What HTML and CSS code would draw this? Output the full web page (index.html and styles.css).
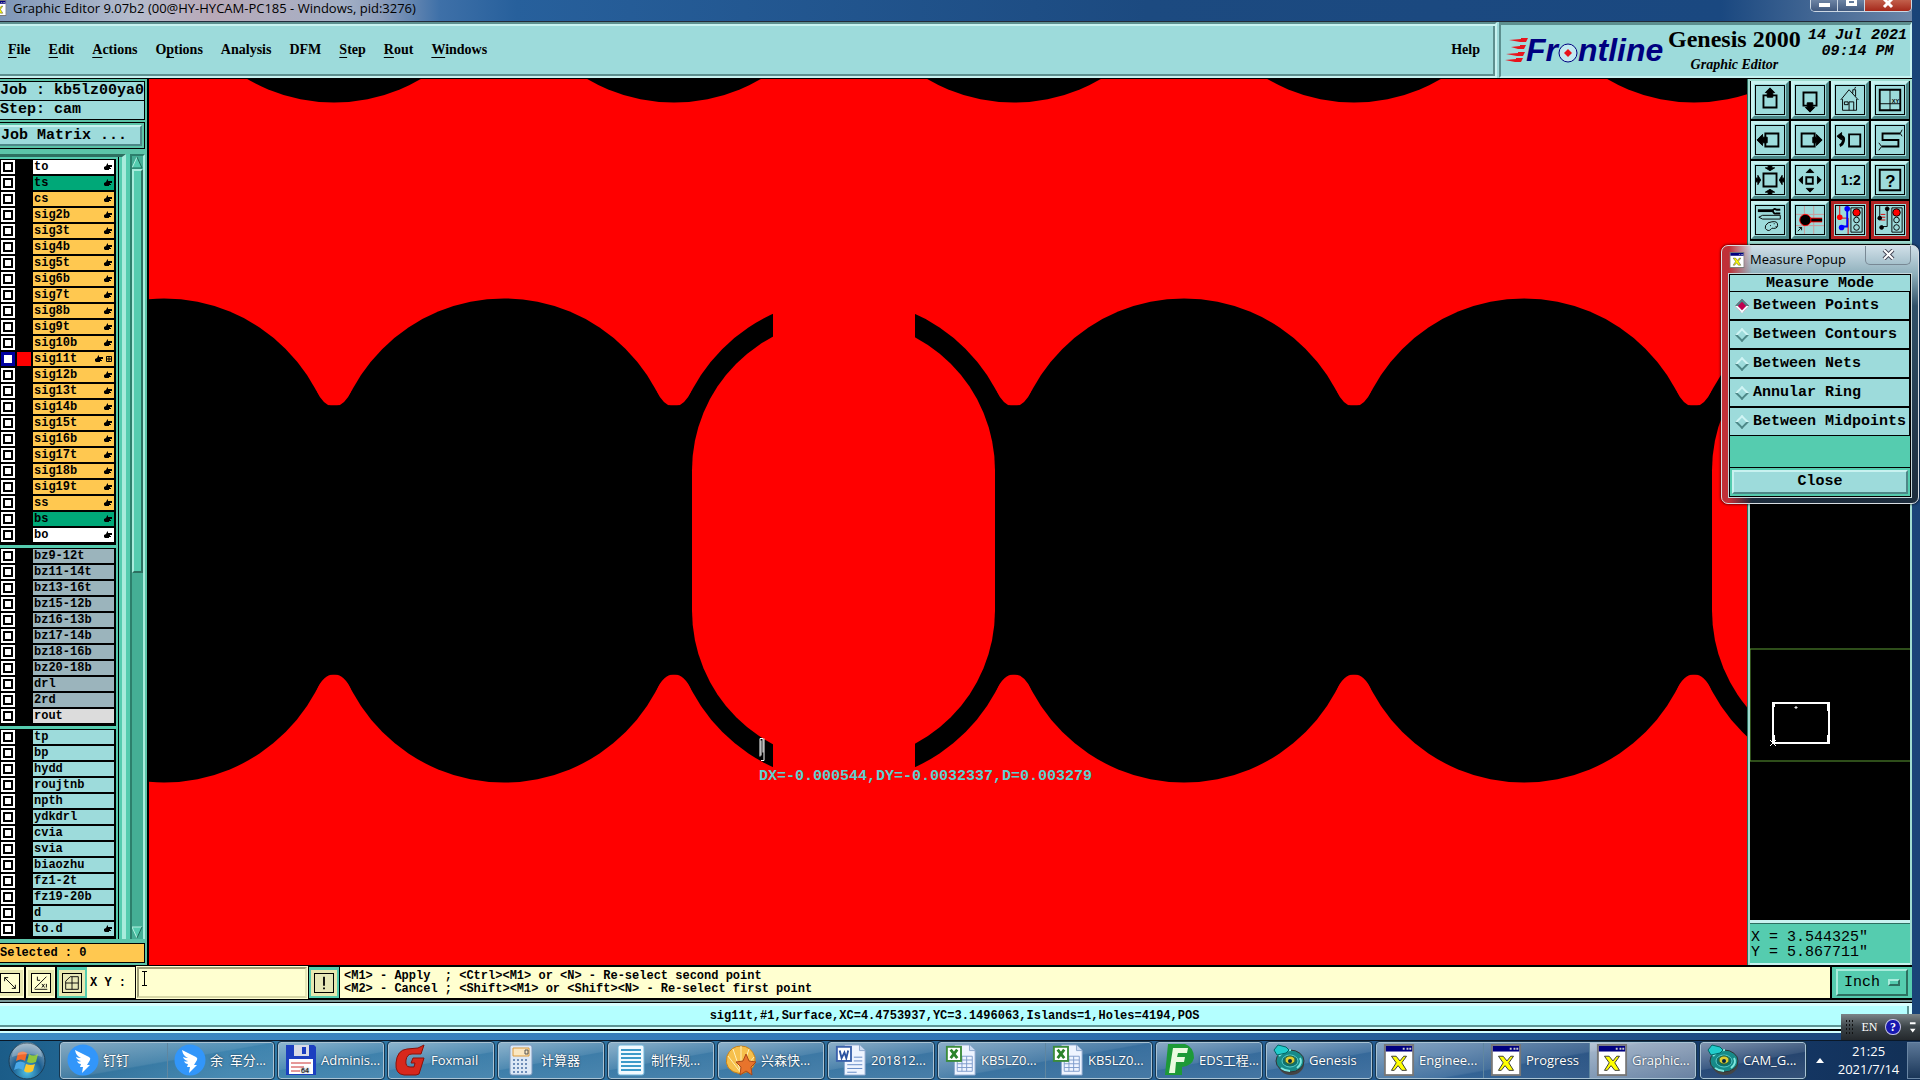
FILE: index.html
```
<!DOCTYPE html>
<html lang="zh-CN">
<head>
    <meta charset="UTF-8">
    <meta name="viewport" content="width=device-width, initial-scale=1.0">
    <title>Graphic Editor 9.07b2</title>
    <link rel="stylesheet" href="styles.css">
</head>
<body>
    <!-- shared icons -->
    <svg class="defs" width="0" height="0">
        <symbol id="hand" viewBox="0 0 8 8"><path d="M3 1l1-1v2h4v2H6v1h1v1H5v1H1L0 6V4l2-1z"/></symbol>
        <symbol id="xwin" viewBox="0 0 32 34">
            <rect x="1" y="1" width="30" height="32" fill="#fff" stroke="#777" stroke-width="2"/>
            <rect x="2" y="2" width="28" height="6" fill="#000080"/>
            <path d="M20 4h2v2h-2zM24 4h2v2h-2zM27 4h2v2h-2z" fill="#ccc"/>
            <path d="M8 13h5l4 5 4-5h3l-5 7 5 8h-5l-4-5-4 5H8l5-8z" fill="#ff0" stroke="#333"/>
        </symbol>
        <symbol id="ding" viewBox="0 0 32 32">
            <circle cx="16" cy="16" r="15.500" fill="#3296fa"/>
            <path d="M8 6l14 7q2 1 1 3l-3 5h3l-8 8 1-6h-3l1-3q-3 0-4-3 2 1 4 0-4-1-5-4 2 1 5 1-5-2-6-8z" fill="#fff"/>
        </symbol>
        <symbol id="excel" viewBox="0 0 32 34">
            <path d="M9 1h16l6 6v26H9z" fill="#eef4ff" stroke="#8ba6cc"/>
            <path d="M25 1v6h6" fill="#cddcf2" stroke="#8ba6cc"/>
            <path d="M12 13h16M12 17h16M12 21h16M12 25h16M12 29h16M12 13v16M17 13v16M22 13v16M28 13v16" stroke="#7d9bcb" fill="none"/>
            <rect x="1" y="3" width="15" height="15" fill="#fff" stroke="#3b8c3b" stroke-width="2"/>
            <path d="M5 6l7 9M12 6l-7 9" stroke="#2b832b" stroke-width="3"/>
        </symbol>
        <symbol id="disc" viewBox="0 0 32 32">
            <ellipse cx="18" cy="20" rx="13" ry="11" fill="#444"/>
            <ellipse cx="17" cy="17" rx="14" ry="11" fill="#178a88" stroke="#333"/>
            <path d="M6 12q5-6 12-6M27 14q3 5-3 10M8 24q4 3 9 3" stroke="#7fe8e0" stroke-width="2" fill="none"/>
            <ellipse cx="17" cy="17" rx="8" ry="6" fill="#0f6f6c" stroke="#5cc"/>
            <ellipse cx="17" cy="16" rx="5" ry="4" fill="#dc3" stroke="#363"/>
            <circle cx="17" cy="17" r="2" fill="#024"/>
            <path d="M1 6l4-5 8 2 3 3-3 3-9 2z" fill="#2cc" stroke="#066"/>
        </symbol>
    </svg>

    <div class="window">
        <header class="titlebar">
            <svg class="title-icon" viewBox="0 0 32 34"><use href="#xwin"/></svg>
            <h1>Graphic Editor 9.07b2 (00@HY-HYCAM-PC185 - Windows, pid:3276)</h1>
            <div class="win-btns">
                <button class="win-min" aria-label="Minimize"><i></i></button>
                <button class="win-max" aria-label="Maximize"><i></i></button>
                <button class="win-close" aria-label="Close window"><svg width="12" height="9" viewBox="0 0 12 9"><path d="M2-1l8 8M10-1L2 7" stroke="#fff" stroke-width="3"/></svg></button>
            </div>
        </header>

        <div class="header">
            <nav class="menubar">
                <button><u>F</u>ile</button>
                <button><u>E</u>dit</button>
                <button><u>A</u>ctions</button>
                <button>O<u>p</u>tions</button>
                <button>Analysis</button>
                <button>DFM</button>
                <button><u>S</u>tep</button>
                <button><u>R</u>out</button>
                <button><u>W</u>indows</button>
                <button class="help">Help</button>
            </nav>
            <div class="brand">
                <svg class="logo" width="162" height="38" viewBox="0 0 162 38">
                    <g fill="#e8141c">
                        <path d="M4 6l12-1 0-1h7l-2 4h-6zM6 13l9-1 0-1h6l-2 4h-6zM1 20l12-1 0-1h7l-2 4h-6zM0 26l11-1 0-1h7l-2 4h-6z"/>
                    </g>
                    <text x="21" y="27">Fr</text>
                    <circle cx="63" cy="19" r="9" fill="#c4eaf0" stroke="#000080" stroke-width="1"/>
                    <path d="M63 15l4 4-4 4-4-4z" fill="#e8141c"/>
                    <text x="73" y="27">ntline</text>
                </svg>
                <div class="product">
                    <strong>Genesis 2000</strong>
                    <em>Graphic Editor</em>
                </div>
                <div class="date"><span>14 Jul 2021</span><span>09:14 PM</span></div>
            </div>
        </div>

        <main class="main">
            <aside class="left">
                <div class="job">Job : kb5lz00ya0</div>
                <div class="job">Step: cam</div>
                <div class="matrix"><button>Job Matrix ...</button></div>
                <div class="layer-area">
                    <div class="layers" id="layers"></div>
                    <div class="scroll">
                        <svg width="11" height="13" viewBox="0 0 11 13"><path d="M5 1L0 12h10z" fill="#55ccaf"/><path d="M5 1L0 12" stroke="#b4f0e0"/><path d="M0 12h10L5 1" stroke="#1f6a58" fill="none"/></svg>
                        <div class="thumb"></div>
                        <div class="trough"></div>
                        <svg width="11" height="13" viewBox="0 0 11 13"><path d="M0 1h10L5 12z" fill="#55ccaf"/><path d="M10 1H0l5 11" stroke="#b4f0e0" fill="none"/><path d="M10 1L5 12" stroke="#1f6a58"/></svg>
                    </div>
                </div>
                <div class="selected">Selected : 0</div>
            </aside>

            <svg class="canvas" viewBox="149 79 1598 887" preserveAspectRatio="xMidYMid slice">
                <defs>
                    <g id="cell">
                        <rect x="-172" y="299" width="344" height="484" rx="172"/>
                        <path d="M152 391q8 15 15 15h8v269h-6q-9 0-17 16l-20-20V416zM-152 391q-8 15-15 15h-8v269h6q9 0 17 16l20-20V416z"/>
                    </g>
                    <g id="slot" fill="#f00">
                        <rect x="-151" y="320" width="303" height="442" rx="151"/>
                        <rect x="-70" y="290" width="142" height="500"/>
                    </g>
                </defs>
                <rect x="149" y="79" width="1598" height="887" fill="#f00"/>
                <circle cx="334" cy="-69" r="172"/>
                <circle cx="674" cy="-69" r="172"/>
                <circle cx="1014" cy="-69" r="172"/>
                <circle cx="1354" cy="-69" r="172"/>
                <circle cx="1694" cy="-69" r="172"/>
                <use href="#cell" x="164"/>
                <use href="#cell" x="504"/>
                <use href="#cell" x="844"/>
                <use href="#cell" x="1184"/>
                <use href="#cell" x="1524"/>
                <use href="#cell" x="1864"/>
                <use href="#slot" x="843"/>
                <use href="#slot" x="1863"/>
                <path d="M760 739h3v14M760 739v18M761 741v15M764 739v22h-3" stroke="#fff" fill="none"/>
                <text x="759" y="780">DX=-0.000544,DY=-0.0032337,D=0.003279</text>
            </svg>

            <aside class="right">
                <div class="tools">
                    <button aria-label="Pan up"><svg viewBox="0 0 30 30"><path class="w2" d="M8 10h14v13H8z"/><path class="f" d="M15 2l5 5h-2v5h-6V7h-2z"/></svg></button>
                    <button aria-label="Pan down"><svg viewBox="0 0 30 30"><path class="w2" d="M8 7h14v14H8z"/><path class="f" d="M15 28l5-5h-2v-5h-6v5h-2z"/></svg></button>
                    <button aria-label="Home"><svg viewBox="0 0 30 30"><path d="M5 15L14 4l10 11M7 14v12h15V14M9 17h4v3H9zM14 26v-9h5v9M18 8V4h3v7M20 3l1-2"/></svg></button>
                    <button aria-label="Window XY"><svg viewBox="0 0 30 30"><path class="w2" d="M4 4h22v22H4z"/><path d="M15 4v22M4 19h22"/><text x="17" y="18" font-size="6">XY</text></svg></button>
                    <button aria-label="Pan left"><svg viewBox="0 0 30 30"><path class="w2" d="M10 8h14v14H10z"/><path class="f" d="M1 15l6-6v3h5v6H7v3z"/></svg></button>
                    <button aria-label="Pan right"><svg viewBox="0 0 30 30"><path class="w2" d="M6 8h14v14H6z"/><path class="f" d="M28 15l-6-6v3h-4v6h4v3z"/></svg></button>
                    <button aria-label="Previous view"><svg viewBox="0 0 30 30"><path class="w2" d="M14 9h12v13H14z"/><path d="M3 11h3q3 1 2 5t-4 5" stroke-width="3"/><path class="f" d="M1 11l5-4v8z"/></svg></button>
                    <button aria-label="Serpentine"><svg viewBox="0 0 30 30"><path class="w2" d="M26 8H7v7h17v7H6"/><path d="M28 4l-2 4 2 3M3 18l3 4-3 4"/></svg></button>
                    <button aria-label="Zoom in"><svg viewBox="0 0 30 30"><path class="w2" d="M8 8h14v14H8z"/><path class="f" d="M15 5l-5-3h3V0h4v2h3zM15 25l-5 3h3v2h4v-2h3zM5 15l-3-5v3H0v4h2v3zM25 15l3-5v3h2v4h-2v3z"/></svg></button>
                    <button aria-label="Zoom out"><svg viewBox="0 0 30 30"><path class="w2" d="M11 12h7v7h-7z"/><path class="f" d="M15 3l4 4h-8zM15 28l4-4h-8zM3 15l4-4v8zM27 15l-4-4v8z"/></svg></button>
                    <button aria-label="Scale 1:2"><svg viewBox="0 0 30 30"><text x="5" y="20" font-size="15" font-weight="bold">1:2</text></svg></button>
                    <button aria-label="Query"><svg viewBox="0 0 30 30"><path class="w2" d="M4 4h22v22H4z"/><text x="10" y="22" font-size="18">?</text></svg></button>
                    <button aria-label="Setup"><svg viewBox="0 0 30 30"><path d="M2 5h16" stroke-width="3"/><path d="M26 4h-4q-3-2-4 1 1 4 4 3h4" stroke-width="2"/><path d="M3 12l4-2h19v4H7zM13 18q-4 3-3 6 3 4 6 1 1-2 3-1 5 0 4-5-1-4-10-1zM15 21h1M19 19h1M21 22h1"/></svg></button>
                    <button aria-label="Snap"><svg viewBox="0 0 30 30"><path d="M9 0v30M19 0v30M0 9h30M0 21h30" stroke="#c99"/><path d="M14 15h14" stroke="#f00" stroke-width="5"/><path d="M14 15h14" stroke="#000" stroke-width="3"/><circle cx="10" cy="15" r="6" class="f snap"/><path d="M2 27l4-4M3 23h3v3"/></svg></button>
                    <button class="red" aria-label="Net on"><svg viewBox="0 0 30 30"><path d="M4 0v13h9v17" stroke="#d00"/><path d="M12 3v19H6" stroke="#00f" stroke-width="2"/><circle cx="4" cy="12" r="3" fill="#f00" stroke="none"/><g fill="#00f" stroke="none"><circle cx="12" cy="3" r="3"/><circle cx="6" cy="23" r="3"/></g><path d="M16 2h12v26H16z"/><circle cx="22" cy="7" r="4" fill="#f00"/><circle cx="22" cy="15" r="3"/><circle cx="22" cy="23" r="3"/></svg></button>
                    <button class="red" aria-label="Net check"><svg viewBox="0 0 30 30"><path d="M4 0v12M12 3v19H6"/><path d="M5 9h5M5 12h5M5 15h5" stroke="#d00"/><g class="f"><circle cx="4" cy="13" r="2"/><circle cx="12" cy="3" r="2"/><circle cx="6" cy="23" r="2"/></g><path d="M17 2h11v26H17z"/><circle cx="22" cy="7" r="4" fill="#f00"/><circle cx="22" cy="15" r="3"/><circle cx="22" cy="23" r="3"/></svg></button>
                </div>
                <svg class="overview" viewBox="0 0 160 677" preserveAspectRatio="xMinYMax slice">
                    <rect x="0" y="406" width="170" height="112" fill="none" stroke="#5c9c34"/>
                    <rect x="23" y="460" width="56" height="40" fill="none" stroke="#fff" stroke-width="2"/>
                    <path d="M24 461v3M78 461v7M78 492v7M24 492v7" stroke="#fff" stroke-width="2"/>
                    <path d="M20 497l6 6M26 497l-6 6M45 464h2v1h-2z" stroke="#fff"/>
                </svg>
                <div class="coords"><span>X = 3.544325"</span><span>Y = 5.867711"</span></div>
            </aside>
        </main>

        <div class="command">
            <button class="cmd" aria-label="Diagonal"><svg viewBox="0 0 20 20"><path d="M4 4l12 12M4 8V4h4M16 12v4h-4"/></svg></button>
            <button class="cmd" aria-label="Angle"><svg viewBox="0 0 20 20"><path d="M3 16L16 3M6 3v4h3M3 17h14M11 11l3 4M14 11l-3 4M16 11v4"/></svg></button>
            <button class="cmd on" aria-label="Grid"><svg viewBox="0 0 20 20"><path d="M3 8l5-5h9v14H3zM10 3v14M3 10h14"/></svg></button>
            <label for="xy">X Y :</label>
            <div class="field">
                <input id="xy" type="text">
                <svg class="ibeam" width="7" height="15" viewBox="0 0 7 15"><path d="M1 0.500h5M1 14.500h5M3.500 0v15" stroke="#000"/></svg>
            </div>
            <button class="cmd on" aria-label="Alert"><svg viewBox="0 0 20 20"><path d="M10 3v10M10 15v2" stroke-width="2"/></svg></button>
            <pre class="hint">&lt;M1&gt; - Apply  ; &lt;Ctrl&gt;&lt;M1&gt; or &lt;N&gt; - Re-select second point
&lt;M2&gt; - Cancel ; &lt;Shift&gt;&lt;M1&gt; or &lt;Shift&gt;&lt;N&gt; - Re-select first point</pre>
            <div class="unit">
                <select aria-label="Units"><option>Inch</option><option>mm</option></select>
                <i></i>
            </div>
        </div>
        <div class="status"><p>sig11t,#1,Surface,XC=4.4753937,YC=3.1496063,Islands=1,Holes=4194,POS</p></div>
    </div>

    <section class="popup">
        <div class="popup-title">
            <svg width="16" height="16" viewBox="0 0 32 34"><use href="#xwin"/></svg>
            <h2>Measure Popup</h2>
            <button aria-label="Close popup"><svg width="13" height="11" viewBox="0 0 13 11"><path d="M2 1l9 9M11 1l-9 9" stroke="#445" stroke-width="4"/><path d="M2 1l9 9M11 1l-9 9" stroke="#fff" stroke-width="2"/></svg></button>
        </div>
        <form class="popup-body">
            <h3>Measure Mode</h3>
            <label><input type="radio" name="mode" checked>Between Points</label>
            <label><input type="radio" name="mode">Between Contours</label>
            <label><input type="radio" name="mode">Between Nets</label>
            <label><input type="radio" name="mode">Annular Ring</label>
            <label><input type="radio" name="mode">Between Midpoints</label>
            <div class="popup-foot"><button type="button">Close</button></div>
        </form>
    </section>

    <div class="langbar">
        <span class="grip"></span>
        <span>EN</span>
        <b>?</b>
        <svg width="8" height="16" viewBox="0 0 8 16"><path d="M1 3h6v2H1zM1 10h6l-3 4z" fill="#fff"/></svg>
    </div>

    <footer class="taskbar">
        <button class="start" aria-label="Start">
            <svg width="38" height="38" viewBox="0 0 38 38">
                <defs><radialGradient id="orb" cx=".5" cy=".8" r=".8"><stop offset="0" stop-color="#4fc3e8"/><stop offset=".5" stop-color="#1c5f92"/><stop offset="1" stop-color="#8fa9bd"/></radialGradient></defs>
                <circle cx="19" cy="19" r="18" fill="url(#orb)" stroke="#1b3d55"/>
                <path d="M10 11q5-3 9 0l-2 8q-4-3-9 0z" fill="#f0682c"/>
                <path d="M21 12q4 3 9 0l-2 8q-5 2-9 0z" fill="#8ec63f"/>
                <path d="M8 21q4-3 9 0l-2 7q-4-3-9 0z" fill="#4aa8e8"/>
                <path d="M18 22q5 2 9 0l-2 7q-5 3-9 0z" fill="#fcc82e"/>
                <path d="M4 15a15 15 0 0130 0q-15-6-30 0z" fill="#fff" opacity=".25"/>
            </svg>
        </button>
        <div class="group">
            <button class="task"><svg><use href="#ding"/></svg>钉钉</button>
            <button class="task"><svg><use href="#ding"/></svg>余&nbsp; 军分...</button>
        </div>
        <div class="group"><button class="task"><svg viewBox="0 0 32 32"><path d="M1 1h28l2 2v28H1z" fill="#1c3fc0"/><path d="M9 1h15v11H9z" fill="#d8dbe6"/><path d="M17 3h4v7h-4z" fill="#1c3fc0"/><path d="M4 15h24v15H4z" fill="#fff"/><path d="M6 19h20M6 23h13M6 27h9" stroke="#c33"/><text x="16" y="29" font-size="7">64</text></svg>Adminis...</button></div>
        <div class="group"><button class="task"><svg viewBox="0 0 32 32"><path d="M29 1l-3 9h-9q-5 0-6 6-1 7 4 7h4l1-4h-4l2-5h11l-5 16-3 1H9q-9-1-8-12Q2 6 12 5l11-1z" fill="#d8281c" stroke="#8a1008"/></svg>Foxmail</button></div>
        <div class="group"><button class="task"><svg viewBox="0 0 32 32"><rect x="5" y="1" width="22" height="30" rx="2" fill="#dce8f6" stroke="#7b98bd"/><path d="M8 4h16v8H8z" fill="#fbe7c0" stroke="#db9a3c"/><path d="M20 6h3v4h-3z" fill="none" stroke="#555"/><path d="M8 16h16M8 20h16M8 24h16M8 28h16" stroke="#6d8db8" stroke-width="2" stroke-dasharray="2 2"/></svg>计算器</button></div>
        <div class="group"><button class="task"><svg viewBox="0 0 32 32"><rect x="3" y="1" width="26" height="30" rx="2" fill="#f2faff" stroke="#6db3d8"/><path d="M6 6h20M6 10h20M6 14h20M6 18h20M6 22h20M6 26h20" stroke="#3d9ac9" stroke-width="2"/></svg>制作规...</button></div>
        <div class="group"><button class="task"><svg viewBox="0 0 32 32"><path d="M16 30Q-2 27 2 12 6 2 16 2t14 11q2 13-14 17z" fill="#f6c04c" stroke="#c98118"/><path d="M16 29L3 12M16 29L8 5M16 29V2M16 29l8-24M16 29l13-16" stroke="#fff0b8"/><path d="M21 10l3 7 7 1-5 5 1 8-6-4-6 4 1-8-5-5 7-1z" fill="#e8742c" stroke="#a8481a"/></svg>兴森快...</button></div>
        <div class="group"><button class="task"><svg viewBox="0 0 32 34"><path d="M9 1h16l6 6v26H9z" fill="#eef4ff" stroke="#8ba6cc"/><path d="M25 1v6h6" fill="#cddcf2" stroke="#8ba6cc"/><path d="M19 14h9M19 18h9M12 22h16M12 26h16M12 30h10" stroke="#5f86c4"/><rect x="1" y="3" width="15" height="15" fill="#fff" stroke="#3b62ac" stroke-width="2"/><path d="M4 7l2 8 3-6 2 6 2-8" stroke="#2b52a0" stroke-width="2" fill="none"/></svg>201812...</button></div>
        <div class="group">
            <button class="task"><svg><use href="#excel"/></svg>KB5LZ0...</button>
            <button class="task"><svg><use href="#excel"/></svg>KB5LZ0...</button>
        </div>
        <div class="group"><button class="task"><svg viewBox="0 0 32 32"><path d="M5 0h17q9 3 9 14-2 8-12 9v8H2z" fill="#1d9a38"/><path d="M10 4h15l-1 5h-9l-1 4h8l-1 5h-8l-1 11H6z" fill="#eafbe0"/></svg>EDS工程...</button></div>
        <div class="group"><button class="task"><svg><use href="#disc"/></svg>Genesis</button></div>
        <div class="group">
            <button class="task"><svg><use href="#xwin"/></svg>Enginee...</button>
            <button class="task"><svg><use href="#xwin"/></svg>Progress</button>
            <button class="task active"><svg><use href="#xwin"/></svg>Graphic...</button>
        </div>
        <div class="group"><button class="task"><svg><use href="#disc"/></svg>CAM_G...</button></div>
        <div class="tray">
            <svg width="8" height="5" viewBox="0 0 8 5"><path d="M4 0l4 5H0z" fill="#fff"/></svg>
            <div class="clock"><span>21:25</span><span>2021/7/14</span></div>
        </div>
        <button class="desktop" aria-label="Show desktop"></button>
    </footer>

    <script>
      // name, colour class; * = has attributes (hand icon)
      var groups = [
        ['to*white', 'ts*green', 'cs*gold', 'sig2b*gold', 'sig3t*gold', 'sig4b*gold', 'sig5t*gold', 'sig6b*gold',
         'sig7t*gold', 'sig8b*gold', 'sig9t*gold', 'sig10b*gold', 'sig11t*gold', 'sig12b*gold', 'sig13t*gold',
         'sig14b*gold', 'sig15t*gold', 'sig16b*gold', 'sig17t*gold', 'sig18b*gold', 'sig19t*gold', 'ss*gold',
         'bs*green', 'bo*white'],
        ['bz9-12t gray', 'bz11-14t gray', 'bz13-16t gray', 'bz15-12b gray', 'bz16-13b gray', 'bz17-14b gray',
         'bz18-16b gray', 'bz20-18b gray', 'drl gray', '2rd gray', 'rout silver'],
        ['tp cyan', 'bp cyan', 'hydd cyan', 'roujtnb cyan', 'npth cyan', 'ydkdrl cyan', 'cvia cyan', 'svia cyan',
         'biaozhu cyan', 'fz1-2t cyan', 'fz19-20b cyan', 'd cyan', 'to.d*cyan']
      ];
      var html = '';
      for (var i = 0; i < groups.length; i++) {
        html += '<ul>';
        for (var j = 0; j < groups[i].length; j++) {
          var item = groups[i][j];
          var hand = item.indexOf('*') > -1;
          var arr = item.split(/[* ]/);
          var work = arr[0] == 'sig11t';
          html += '<li' + (work ? ' class="work"' : '') + '><input type="checkbox" id="l-' + arr[0] + '"' + (work ? ' checked' : '') + '>' +
            '<i></i><label class="' + arr[1] + '" for="l-' + arr[0] + '"><span>' + arr[0] + '</span>' +
            (hand ? '<svg width="8" height="8"><use href="#hand"/></svg>' : '') +
            (work ? '<svg width="6" height="6" viewBox="0 0 6 6"><path d="M.5.5h5v5h-5zM3 0v6M0 3h6" fill="none" stroke="#000"/></svg>' : '') +
            '</label></li>';
        }
        html += '</ul>';
      }
      document.getElementById('layers').innerHTML = html;
    </script>
</body>
</html>
```

FILE: styles.css
```
* {
    box-sizing: border-box;
}
html, body {
    height: 100%;
    margin: 0;
    padding: 0;
}
body {
    display: flex;
    flex-direction: column;
    overflow: hidden;
    background: #000;
    color: #000;
    font: bold 15px/16px "Liberation Mono", monospace;
}
button, input, select {
    margin: 0;
    padding: 0;
    border: 0;
    border-radius: 0;
    background: none;
    color: inherit;
    font: inherit;
    appearance: none;
}
h1, h2, h3, p, ul, pre {
    margin: 0;
    padding: 0;
    font: inherit;
    list-style: none;
}
.defs {
    position: absolute;
}

/* window */
.window {
    flex: 1;
    min-height: 0;
    display: flex;
    flex-direction: column;
    padding: 0 8px 7px 0;
    background: linear-gradient(to right, #3d8cc4 0, #2f74b4 50%, #1c4a80 90%, #1a4478 100%);
}
.titlebar {
    display: flex;
    align-items: flex-start;
    height: 21px;
    overflow: hidden;
    font: 13px/16px "Open Sans", "Noto Sans CJK SC", sans-serif;
    background: linear-gradient(to right, #7d96b8 0, #b5bccd 7%, #b9a9b8 11%, #a3b0c6 18%, #8b9cba 20%, #3e70a8 23%, #27609c 27%, #1c4a80 60%, #1a4880 90%, #6c86a8 100%);
}
.title-icon {
    width: 16px;
    height: 16px;
    margin-left: -9px;
}
.titlebar h1 {
    flex: 1;
    padding-left: 6px;
}
.win-btns {
    display: flex;
    height: 12px;
    border: 1px solid #ccd8e4;
    border-top: 0;
    border-radius: 0 0 5px 5px;
    overflow: hidden;
}
.win-btns button {
    display: flex;
    justify-content: center;
    width: 27px;
    background: linear-gradient(#6d84a4, #41597e);
    border-right: 1px solid #ccd8e4;
}
.win-btns .win-close {
    width: 46px;
    border: 0;
    background: linear-gradient(#c2604c, #a5281a);
}
.win-min i {
    width: 11px;
    height: 4px;
    margin-top: 3px;
    background: #fff;
}
.win-max i {
    width: 11px;
    height: 8px;
    margin-top: -2px;
    border: 3px solid #fff;
}

/* menu bar and logo */
.header {
    display: flex;
    height: 58px;
    border-top: 1px solid #222b3a;
    border-bottom: 1px solid #000;
    background: #9ddbdb;
}
.menubar {
    flex: 1;
    display: flex;
    align-items: center;
    gap: 18px;
    padding: 0 15px 0 8px;
    margin-right: 2px;
    border: 2px solid #c8f2f0;
    border-left: 0;
    border-top-color: #5d8f8f;
    box-shadow: inset 0 2px #c8f2f0, inset -2px -2px #5d8f8f;
    font: bold 14px/16px "Liberation Serif", serif;
}
.menubar u {
    text-underline-offset: 3px;
}
.help {
    margin-left: auto;
}
.brand {
    display: flex;
    width: 413px;
    padding: 3px 3px 0 4px;
    border: 2px solid #c8f2f0;
    border-top: 3px solid #5d8f8f;
    border-left-color: #5d8f8f;
}
.logo {
    margin-top: 6px;
    overflow: visible;
}
.logo text {
    font: italic bold 32px "Liberation Sans", sans-serif;
    fill: #000080;
}
.product {
    display: flex;
    flex-direction: column;
    align-items: center;
    padding-left: 1px;
    font-family: "Liberation Serif", serif;
}
.product strong {
    font-size: 24px;
    line-height: 22px;
}
.product em {
    padding-top: 7px;
    font-size: 14px;
}
.date {
    display: flex;
    flex-direction: column;
    align-items: center;
    margin-left: auto;
    font-style: italic;
}

/* layer list */
.main {
    flex: 1;
    min-height: 0;
    display: flex;
}
.left {
    display: flex;
    flex-direction: column;
    width: 149px;
    padding: 2px 2px 2px 0;
    border-right: 2px solid #000;
    background: #5cc4a8;
}
.job {
    height: 20px;
    margin-bottom: -1px;
    border: 1px solid #000;
    border-left: 0;
    background: #9ddbdb;
    line-height: 18px;
    white-space: nowrap;
}
.matrix {
    height: 27px;
    margin-top: 3px;
    padding: 2px;
    padding-left: 0;
    border: 1px solid #000;
    border-left: 0;
}
.matrix button {
    width: 100%;
    height: 21px;
    padding-left: 1px;
    border: 2px solid #c8f2f0;
    border-left: 0;
    border-right-color: #4d8787;
    border-bottom-color: #4d8787;
    background: #9ddbdb;
    text-align: left;
    line-height: 16px;
}
.layer-area {
    display: flex;
    flex: 1;
    min-height: 0;
    margin-top: 5px;
    background: #55ccaf;
}
.layers {
    width: 126px;
    padding-top: 2px;
    border-top: 3px solid #2d6f60;
    border-right: 4px solid #a8ecdc;
    background: linear-gradient(to right, #55ccaf 118px, #000 118px, #000 119px, #55ccaf 119px);
    overflow: hidden;
}
.layers ul {
    width: 116px;
    margin-bottom: 3px;
    padding: 1px 0;
    background: #000;
}
.layers li {
    display: flex;
    height: 16px;
    padding: 0 2px 2px 1px;
}
.layers input {
    width: 14px;
    height: 14px;
    border: 2px solid #fff;
    background: #fff;
    box-shadow: inset 0 0 0 2px #000;
}
.layers i {
    width: 14px;
    margin: 0 2px;
}
.work input {
    border-color: #0000a0;
    box-shadow: inset 0 0 0 1px #0000a0;
}
.work i {
    background: #f00;
}
.layers label {
    flex: 1;
    display: flex;
    align-items: center;
    gap: 3px;
    padding: 0 2px 0 1px;
    font-size: 12px;
    line-height: 14px;
}
.layers label span {
    flex: 1;
}
.white { background: #fff; }
.green { background: #00a878; }
.gold { background: #ffc850; }
.gray { background: #9bb4bc; }
.silver { background: #dcdcdc; }
.cyan { background: #9ddbdb; }
.scroll {
    display: flex;
    flex-direction: column;
    width: 15px;
    margin-left: 4px;
    border: 2px solid #2d7f6c;
    border-right-color: #a8ecdc;
    border-bottom: 0;
    background: #45ae95;
}
.scroll svg {
    flex: none;
}
.thumb {
    flex: 406;
    width: 11px;
    border: 2px solid #a8ecdc;
    border-right-color: #2d6f60;
    border-bottom-color: #2d6f60;
    background: #55ccaf;
}
.trough {
    flex: 358;
}
.selected {
    height: 20px;
    margin-top: 4px;
    border: 1px solid #000;
    border-left: 0;
    background: #ffc850;
    font-size: 12px;
    line-height: 18px;
}

/* drawing area */
.canvas {
    flex: 1;
    min-width: 0;
    height: 100%;
}
.canvas text {
    font: bold 15px "Liberation Mono", monospace;
    fill: #5cd0d0;
}

/* tools and overview */
.right {
    display: flex;
    flex-direction: column;
    width: 165px;
    padding: 2px 2px 0 2px;
    border-left: 1px solid #2d6f60;
    background: #9fdcd0;
}
.tools {
    display: grid;
    grid-template-columns: repeat(4, 1fr);
    gap: 2px;
    padding: 0 1px 2px;
    background: #000;
}
.tools button {
    height: 38px;
    padding: 1px;
    border: 3px solid #c8f2f0;
    border-right-color: #4d8787;
    border-bottom-color: #4d8787;
    background: #9ddbdb;
}
.tools .red {
    border-color: #b02424;
}
.tools svg {
    display: block;
    width: 30px;
    height: 30px;
    border: 1px solid #000;
    fill: none;
    stroke: #000;
}
.tools .w2 {
    stroke-width: 2;
}
.tools .f {
    fill: #000;
}
.tools .snap {
    stroke: #f00;
}
.tools text {
    fill: #000;
    stroke: none;
    font-family: "Liberation Sans", sans-serif;
}
.overview {
    flex: 1;
    min-height: 0;
    margin-top: 3px;
    background: #000;
}
.coords {
    display: flex;
    flex-direction: column;
    height: 45px;
    padding: 7px 1px 0;
    border-top: 3px solid #c8f2f0;
    border-bottom: 2px solid #c8f2f0;
    box-shadow: inset 0 1px #2d6f60;
    background: #55ccaf;
    line-height: 15px;
    font-weight: normal;
}

/* command line */
.command {
    display: flex;
    height: 35px;
    padding: 2px 0;
    background: #000;
}
.cmd {
    width: 31px;
    padding: 3px;
    border: 2px solid #000;
    border-width: 0 2px 0 0;
    background: #ffffd0;
}
.cmd:first-child {
    width: 26px;
    padding-left: 0;
}
.cmd.on {
    border: 3px solid #55ccaf;
    background: #e8e8b8;
    width: 30px;
    padding: 2px;
}
.cmd svg {
    display: block;
    width: 20px;
    height: 20px;
    margin: 0 auto;
    border: 1px solid #000;
    fill: none;
    stroke: #000;
    outline: 3px solid #e8e8b0;
}
.cmd:first-child svg {
    margin: 0;
}
.command label {
    width: 48px;
    padding-left: 3px;
    background: #ffffd0;
    font-size: 12px;
    line-height: 33px;
}
.field {
    position: relative;
    display: flex;
    width: 170px;
    margin: 0 2px;
}
.field input {
    width: 100%;
    padding-left: 4px;
    border: 2px solid #a0a078;
    border-right-color: #e8e8b8;
    border-bottom-color: #d8d8a8;
    background: #ffffd0;
    outline: 1px solid #ffffd0;
}
.ibeam {
    position: absolute;
    left: 4px;
    top: 4px;
}
.hint {
    flex: 1;
    margin-left: 1px;
    padding: 3px 4px;
    background: #ffffd0;
    font-size: 12px;
    line-height: 13px;
}
.unit {
    position: relative;
    width: 80px;
    margin-left: 2px;
    padding: 2px 4px;
    background: #55ccaf;
}
.unit select {
    width: 100%;
    height: 27px;
    padding-left: 6px;
    border: 2px solid #a8ecdc;
    border-right-color: #2d6f60;
    border-bottom-color: #2d6f60;
    font-weight: normal;
}
.unit i {
    position: absolute;
    right: 12px;
    top: 12px;
    width: 12px;
    height: 7px;
    border: 2px solid #a8ecdc;
    border-right-color: #2d6f60;
    border-bottom-color: #2d6f60;
    pointer-events: none;
}
.status {
    padding-bottom: 2px;
    border-top: 2px solid #7c9c9c;
    border-bottom: 2px solid #d0ffff;
    background: #000;
}
.status p {
    height: 26px;
    margin-top: 1px;
    border: 3px solid #d8ffff;
    border-bottom-width: 2px;
    border-left: 0;
    box-shadow: inset -2px -2px #5d9494;
    background: #b4ffff;
    text-align: center;
    font-size: 12px;
    line-height: 21px;
}

/* floating measure window */
.popup {
    position: absolute;
    top: 245px;
    right: 1px;
    width: 198px;
    padding: 0 7px 6px;
    border: 1px solid #d8dde2;
    border-radius: 7px;
    background: linear-gradient(to right, #c03038 0, #c03038 7px, transparent 30px), linear-gradient(#d0dfe8 0, #8fb0bc 28px, #305068 60px, #1c2c3c);
    box-shadow: 0 0 3px #000;
}
.popup-title {
    display: flex;
    align-items: center;
    gap: 5px;
    height: 28px;
    font: 13px/18px "Open Sans", sans-serif;
}
.popup-title h2 {
    flex: 1;
    padding-bottom: 2px;
}
.popup-title button {
    align-self: flex-start;
    width: 46px;
    height: 19px;
    border: 1px solid #788894;
    border-top: 0;
    border-radius: 0 0 5px 5px;
}
.popup-body {
    border: 1px solid #000;
    outline: 1px solid #c8d8dc;
    background: #55ccaf;
    font-weight: bold;
}
.popup-body h3 {
    height: 16px;
    background: #9ddbdb;
    text-align: center;
    line-height: 17px;
}
.popup-body label {
    display: flex;
    align-items: center;
    gap: 6px;
    height: 29px;
    padding-left: 7px;
    border: 1px solid #000;
    border-width: 1px 1px 1px 0;
    background: #9ddbdb;
    white-space: nowrap;
}
.popup-body input {
    flex: none;
    width: 10px;
    height: 10px;
    border: 2px solid #d0f4f4;
    border-right-color: #4d8787;
    border-bottom-color: #4d8787;
    transform: rotate(45deg);
}
.popup-body input:checked {
    border-color: #4d8787 #f0ffff #f0ffff #4d8787;
    background: #c00050;
}
.popup-foot {
    margin-top: 31px;
    padding: 2px;
    border-top: 1px solid #000;
}
.popup-foot button {
    display: block;
    width: 100%;
    height: 24px;
    border: 2px solid #c8f2f0;
    border-right-color: #4d8787;
    border-bottom-color: #4d8787;
    background: #9ddbdb;
}

/* input language bar */
.langbar {
    position: absolute;
    right: 0;
    bottom: 40px;
    display: flex;
    align-items: center;
    gap: 8px;
    width: 79px;
    height: 26px;
    padding: 0 4px;
    background: linear-gradient(#7c8488, #3c4448 50%, #24282c);
    color: #fff;
    font: 12px/14px "Liberation Serif", serif;
}
.grip {
    width: 9px;
    height: 17px;
    background: radial-gradient(circle, #111 1px, transparent 1px) 0 0 / 3px 4px;
}
.langbar b {
    width: 16px;
    border: 1px solid #c8c8e8;
    border-radius: 50%;
    background: #1818b0;
    text-align: center;
}

/* taskbar */
.taskbar {
    display: flex;
    gap: 4px;
    height: 40px;
    padding: 1px 0;
    border-top: 1px solid #0a1828;
    background: linear-gradient(to right, #1b5c88 0, #2f7aa8 12%, #2c6c9c 45%, #245a90 75%, #15396a 90%, #123056 100%);
    color: #fff;
    font: 13px/18px "Open Sans", "Noto Sans CJK SC", sans-serif;
}
.start {
    flex: none;
    width: 56px;
    padding-left: 8px;
    text-align: left;
}
.start svg {
    display: block;
}
.group {
    flex: none;
    display: flex;
    border: 1px solid #a9c3d4;
    border-radius: 3px;
    outline: 1px solid #17364f;
    background: linear-gradient(170deg, rgba(255, 255, 255, .45) 0, rgba(255, 255, 255, .16) 50%, rgba(255, 255, 255, .08) 52%, rgba(255, 255, 255, .14));
}
.task {
    display: flex;
    align-items: center;
    gap: 4px;
    width: 106px;
    padding: 0 0 2px 6px;
    white-space: nowrap;
    text-shadow: 0 0 2px #123;
}
.group .task:only-child {
    width: 104px;
}
.task + .task {
    border-left: 1px solid #5f86a0;
}
.task.active {
    background: linear-gradient(170deg, rgba(255, 255, 255, .6), rgba(255, 255, 255, .25));
}
.task svg {
    flex: none;
    width: 32px;
    height: 32px;
}
.tray {
    flex: 1;
    display: flex;
    align-items: center;
    gap: 10px;
    padding-left: 6px;
}
.tray svg {
    flex: none;
}
.clock {
    flex: 1;
    display: flex;
    flex-direction: column;
    align-items: center;
    padding-bottom: 2px;
}
.desktop {
    flex: none;
    width: 13px;
    border: 1px solid #6a86a4;
    border-right: 0;
    background: linear-gradient(#5c7898, #1a3658);
}
```
